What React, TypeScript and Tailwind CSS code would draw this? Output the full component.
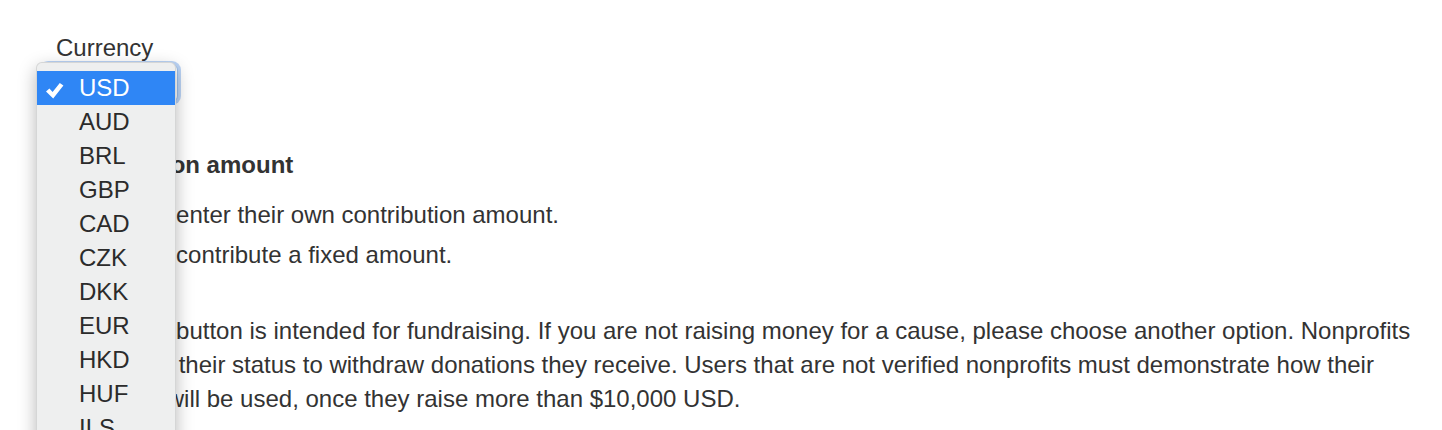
import React from "react";

const currencies = ["USD", "AUD", "BRL", "GBP", "CAD", "CZK", "DKK", "EUR", "HKD", "HUF", "ILS", "JPY", "MXN"];

function Check() {
  return (
    <svg width="18" height="16" viewBox="0 0 18 16" className="absolute left-[9px] top-[12px]">
      <path d="M0 8.6 L3.4 5.6 L6.6 9 L13.8 0 L17.4 2.6 L7.2 15.4 Z" fill="#ffffff" />
    </svg>
  );
}

export default function App() {
  return (
    <div
      className="relative w-[1442px] h-[430px] overflow-hidden bg-white text-[#333333] text-[24px]"
      style={{ fontFamily: '"Liberation Sans", Arial, Helvetica, sans-serif' }}
    >
      <div className="pl-[36px] pt-[34px]">
        <div className="flex w-[142px] flex-col items-start">
          <label className="pl-[20px] leading-[28px]">Currency</label>
          <div className="ml-[6px] mt-[2px] h-[38px] w-[136px] rounded-[6px] border border-[#9cc0ec] bg-white ring-[3px] ring-[#8db8f0]/60" />
        </div>

        <div className="pl-[20px]">
          <h3 className="mt-[49px] font-bold leading-[28px]">Contribution amount</h3>
          <div className="mt-[16px]">
            <div className="leading-[40px]">Let donors enter their own contribution amount.</div>
            <div className="leading-[40px]">Let donors contribute a fixed amount.</div>
          </div>
          <p className="mt-[39px] w-[1375px] leading-[34px]">
            The Donor button is intended for fundraising. If you are not raising money for a cause, please choose
            another option. Nonprofits must verify their status to withdraw donations they receive. Users that are
            not verified nonprofits must demonstrate how their donations will be used, once they raise more than
            $10,000 USD.
          </p>
        </div>
      </div>

      <div className="absolute left-[36px] top-[62px] h-[420px] w-[140px] rounded-[6px] border border-black/10 bg-[#eeefef] pt-[8px] shadow-[0_6px_18px_rgba(0,0,0,0.28)]">
        {currencies.map((c, i) => (
          <div
            key={c}
            className={
              i === 0
                ? "relative h-[34px] bg-[#2f86f5] pl-[42px] leading-[34px] text-white"
                : "relative h-[34px] pl-[42px] leading-[34px] text-[#2b2b2b]"
            }
          >
            {i === 0 && <Check />}
            {c}
          </div>
        ))}
      </div>
    </div>
  );
}
